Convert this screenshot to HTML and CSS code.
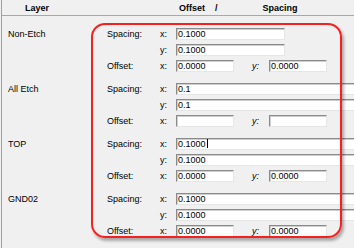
FILE: index.html
```html
<!DOCTYPE html>
<html lang="en">
<head>
  <meta charset="UTF-8">
  <title>Layer offsets</title>
  <link rel="stylesheet" href="styles.css">
</head>
<body>
  <div id="frame">
    <div class="head">
      <span class="h-layer">Layer</span>
      <span class="h-offset">Offset</span>
      <span class="h-slash">/</span>
      <span class="h-spacing">Spacing</span>
    </div>

    <div class="layers">
      <div class="group">
        <div class="name">Non-Etch</div>
        <div class="label">Spacing:</div><div class="axis">x:</div>
        <div class="field narrow">0.1000</div>
        <div class="axis second">y:</div>
        <div class="field narrow">0.1000</div>
        <div class="label">Offset:</div><div class="axis">x:</div>
        <div class="pair"><div class="field small">0.0000</div><span class="axis-y">y:</span><div class="field small">0.0000</div></div>
      </div>

      <div class="group">
        <div class="name">All Etch</div>
        <div class="label">Spacing:</div><div class="axis">x:</div>
        <div class="field">0.1</div>
        <div class="axis second">y:</div>
        <div class="field">0.1</div>
        <div class="label">Offset:</div><div class="axis">x:</div>
        <div class="pair"><div class="field small"></div><span class="axis-y">y:</span><div class="field small"></div></div>
      </div>

      <div class="group">
        <div class="name">TOP</div>
        <div class="label">Spacing:</div><div class="axis">x:</div>
        <div class="field">0.1000<span class="caret"></span></div>
        <div class="axis second">y:</div>
        <div class="field">0.1000</div>
        <div class="label">Offset:</div><div class="axis">x:</div>
        <div class="pair"><div class="field small">0.0000</div><span class="axis-y">y:</span><div class="field small">0.0000</div></div>
      </div>

      <div class="group">
        <div class="name">GND02</div>
        <div class="label">Spacing:</div><div class="axis">x:</div>
        <div class="field">0.1000</div>
        <div class="axis second">y:</div>
        <div class="field">0.1000</div>
        <div class="label">Offset:</div><div class="axis">x:</div>
        <div class="pair"><div class="field small">0.0000</div><span class="axis-y">y:</span><div class="field small">0.0000</div></div>
      </div>
    </div>

    <div class="highlight"></div>
  </div>
</body>
</html>
```

FILE: styles.css
```css
html,body {
  margin: 0;
  padding: 0;
  overflow: hidden;
}
body {
  background-color: #f0f0f0;
  font-family: "Liberation Sans", Arial, sans-serif;
  font-size: 9px;
  color: #000;
}
#frame {
  position: relative;
  margin-left: 1px;
  height: 100vh;
  border-left: 1px solid #a0a0a0;
  overflow: hidden;
}
.head {
  display: flex;
  align-items: center;
  height: 15px;
  border-bottom: 1px solid #a8a8a8;
  font-weight: bold;
}
.h-layer {
  margin-left: 23px;
}
.h-offset {
  margin-left: 130px;
}
.h-slash {
  margin-left: 10px;
}
.h-spacing {
  margin-left: 45px;
}

.layers {
  display: flex;
  flex-direction: column;
  gap: 11px;
  padding: 12px 0 0 6px;
}
.group {
  display: grid;
  grid-template-columns: 99px 53px 16px 1fr;
  grid-template-rows: 12px 12px 12px;
  row-gap: 4px;
  align-items: center;
}
.name {
  grid-row: 1 / 4;
  align-self: start;
  line-height: 12px;
}
.axis.second {
  grid-column: 3;
}
.field {
  box-sizing: border-box;
  height: 12px;
  width: 180px;
  padding-left: 1px;
  line-height: 10px;
  background-color: #fff;
  border-top: 1px solid #8a8a8a;
  border-left: 1px solid #8a8a8a;
  border-right: 1px solid #e6e6e6;
  border-bottom: 1px solid #e6e6e6;
  box-shadow: inset 1px 1px 0 #cfcfcf;
  white-space: nowrap;
}
.field.narrow {
  width: 109px;
}
.field.small {
  width: 58px;
}
.pair {
  display: flex;
  align-items: center;
}
.axis-y {
  width: 17px;
  margin-left: 18px;
  font-style: italic;
}
.caret {
  display: inline-block;
  width: 1px;
  height: 9px;
  margin-left: 1px;
  vertical-align: -1px;
  background-color: #000;
}

/* red annotation drawn over the form */
.highlight {
  position: absolute;
  left: 89px;
  top: 23px;
  width: 247px;
  height: 211px;
  border: 2px solid #f52020;
  border-radius: 14px;
  box-shadow: 2px 3px 3px rgba(0, 0, 0, 0.3);
}
```
